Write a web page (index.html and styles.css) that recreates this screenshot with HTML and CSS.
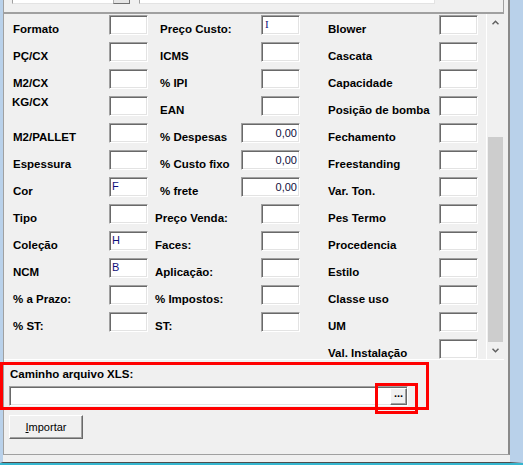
FILE: index.html
```html
<!DOCTYPE html>
<html>
<head>
<meta charset="utf-8">
<link rel="stylesheet" href="styles.css">
</head>
<body>
<div class="window">
  <div class="panel">
    <div class="topstrip">
      <div class="combo"><div class="combo-btn"></div></div>
      <div class="topinput"></div>
    </div>
    <div class="scrollbox">
      <div class="fields">
        <div class="col col1">
          <div class="row"><span class="lbl">Formato</span><div class="fld"></div></div>
          <div class="row"><span class="lbl">PÇ/CX</span><div class="fld"></div></div>
          <div class="row"><span class="lbl">M2/CX</span><div class="fld"></div></div>
          <div class="row"><span class="lbl up">KG/CX</span><div class="fld"></div></div>
          <div class="row"><span class="lbl">M2/PALLET</span><div class="fld"></div></div>
          <div class="row"><span class="lbl">Espessura</span><div class="fld"></div></div>
          <div class="row"><span class="lbl">Cor</span><div class="fld">F</div></div>
          <div class="row"><span class="lbl">Tipo</span><div class="fld"></div></div>
          <div class="row"><span class="lbl">Coleção</span><div class="fld">H</div></div>
          <div class="row"><span class="lbl">NCM</span><div class="fld">B</div></div>
          <div class="row"><span class="lbl">% a Prazo:</span><div class="fld"></div></div>
          <div class="row"><span class="lbl">% ST:</span><div class="fld"></div></div>
        </div>
        <div class="col col2">
          <div class="row"><span class="lbl">Preço Custo:</span><div class="fld"><span class="serif">I</span></div></div>
          <div class="row"><span class="lbl">ICMS</span><div class="fld"></div></div>
          <div class="row"><span class="lbl">% IPI</span><div class="fld"></div></div>
          <div class="row"><span class="lbl">EAN</span><div class="fld"></div></div>
          <div class="row"><span class="lbl">% Despesas</span><div class="fld wide">0,00</div></div>
          <div class="row"><span class="lbl">% Custo fixo</span><div class="fld wide">0,00</div></div>
          <div class="row"><span class="lbl">% frete</span><div class="fld wide">0,00</div></div>
          <div class="row"><span class="lbl shift">Preço Venda:</span><div class="fld"></div></div>
          <div class="row"><span class="lbl shift">Faces:</span><div class="fld"></div></div>
          <div class="row"><span class="lbl shift">Aplicação:</span><div class="fld"></div></div>
          <div class="row"><span class="lbl shift">% Impostos:</span><div class="fld"></div></div>
          <div class="row"><span class="lbl shift">ST:</span><div class="fld"></div></div>
        </div>
        <div class="col col3">
          <div class="row"><span class="lbl">Blower</span><div class="fld"></div></div>
          <div class="row"><span class="lbl">Cascata</span><div class="fld"></div></div>
          <div class="row"><span class="lbl">Capacidade</span><div class="fld"></div></div>
          <div class="row"><span class="lbl">Posição de bomba</span><div class="fld"></div></div>
          <div class="row"><span class="lbl">Fechamento</span><div class="fld"></div></div>
          <div class="row"><span class="lbl">Freestanding</span><div class="fld"></div></div>
          <div class="row"><span class="lbl">Var. Ton.</span><div class="fld"></div></div>
          <div class="row"><span class="lbl">Pes Termo</span><div class="fld"></div></div>
          <div class="row"><span class="lbl">Procedencia</span><div class="fld"></div></div>
          <div class="row"><span class="lbl">Estilo</span><div class="fld"></div></div>
          <div class="row"><span class="lbl">Classe uso</span><div class="fld"></div></div>
          <div class="row"><span class="lbl">UM</span><div class="fld"></div></div>
          <div class="row"><span class="lbl">Val. Instalação</span><div class="fld"></div></div>
        </div>
      </div>
      <div class="scrollbar">
        <div class="sb-btn"><svg width="7" height="5" viewBox="0 0 7 5"><polyline points="0.5,4.2 3.5,1.2 6.5,4.2" fill="none" stroke="#606060" stroke-width="1.5"/></svg></div>
        <div class="sb-track"><div class="sb-thumb"></div></div>
        <div class="sb-btn"><svg width="7" height="5" viewBox="0 0 7 5"><polyline points="0.5,0.8 3.5,3.8 6.5,0.8" fill="none" stroke="#606060" stroke-width="1.5"/></svg></div>
      </div>
    </div>
    <div class="bottom">
      <div class="cap">Caminho arquivo XLS:</div>
      <div class="path"><div class="browse">...</div></div>
      <div class="btn"><span><u>I</u>mportar</span></div>
    </div>
  </div>
</div>
<div class="mark mark-a"></div>
<div class="mark mark-b"></div>
</body>
</html>
```
FILE: styles.css
```css
html, body {
  margin: 0;
  padding: 0;
  background: #ffffff;
}
body {
  width: 523px;
  height: 472px;
  overflow: hidden;
  position: relative;
  font-family: "Liberation Sans", Arial, sans-serif;
  color: #000;
}
.window {
  box-sizing: border-box;
  width: 523px;
  height: 463px;
  background: #f0f0f0;
  border-left: 3px solid #b9d1ea;
  border-right: 13px solid #b9d1ea;
  border-bottom: 1px solid #4d4d4d;
  box-shadow: 0 2px 0 #35b6cf;
}
.panel {
  box-sizing: border-box;
  height: 455px;
  border-left: 1px solid #a0a0a0;
  border-right: 2px solid #8a8a8a;
  border-bottom: 1px solid #a0a0a0;
  display: flex;
  flex-direction: column;
}
.topstrip {
  box-sizing: border-box;
  width: 500px;
  height: 12px;
  border-right: 1px solid #a0a0a0;
  display: flex;
  align-items: flex-start;
}
.combo {
  box-sizing: border-box;
  margin-left: 8px;
  width: 118px;
  height: 4px;
  background: #fff;
  border-left: 1px solid #a0a0a0;
  border-bottom: 1px solid #e3e3e3;
  display: flex;
  justify-content: flex-end;
}
.combo-btn {
  box-sizing: border-box;
  width: 17px;
  height: 4px;
  background: #e5e5e5;
  border-left: 1px solid #b0b0b0;
  border-right: 1px solid #707070;
  border-bottom: 1px solid #707070;
}
.topinput {
  box-sizing: border-box;
  margin-left: 9px;
  width: 296px;
  height: 4px;
  background: #fff;
  border-left: 1px solid #a0a0a0;
  border-right: 1px solid #e3e3e3;
  border-bottom: 1px solid #e3e3e3;
}
.scrollbox {
  box-sizing: border-box;
  width: 500px;
  height: 348px;
  border-top: 2px solid #a0a0a0;
  border-bottom: 1px solid #ffffff;
  display: flex;
}
.fields {
  width: 482px;
  padding-top: 1px;
  display: flex;
  align-items: flex-start;
  overflow: hidden;
}
.col {
  display: flex;
  flex-direction: column;
  flex: none;
}
.col1 { width: 144px; }
.col2 { width: 140px; margin-left: 12px; }
.col3 { width: 178px; }
.row {
  height: 27px;
  display: flex;
  align-items: flex-start;
  flex: none;
}
.lbl {
  flex: 1;
  font-weight: bold;
  font-size: 11.5px;
  line-height: 13px;
  padding-top: 8px;
  white-space: nowrap;
}
.col1 .lbl { padding-left: 9px; }
.col3 .lbl { padding-left: 28px; }
.lbl.up { padding-top: 0; margin-left: -1px; }
.lbl.shift { margin-left: -5px; }
.fld {
  box-sizing: border-box;
  flex: none;
  width: 39px;
  height: 20px;
  background: #fff;
  border: 1px solid;
  border-color: #a0a0a0 #ffffff #ffffff #a0a0a0;
  box-shadow: inset 1px 1px 0 #696969, inset -1px -1px 0 #e3e3e3;
  font-size: 11px;
  line-height: 13px;
  color: #10107a;
  padding: 2px 0 0 2px;
}
.fld.wide {
  width: 59px;
  text-align: right;
  padding: 3px 2px 0 0;
  color: #101040;
}
.serif {
  font-family: "Liberation Serif", "Times New Roman", serif;
  font-size: 11px;
  margin-left: 1px;
}
.scrollbar {
  box-sizing: border-box;
  width: 18px;
  border-left: 1px solid #ffffff;
  display: flex;
  flex-direction: column;
}
.sb-btn {
  height: 17px;
  flex: none;
  display: flex;
  align-items: center;
  justify-content: center;
}
.sb-btn svg { display: block; }
.sb-track {
  flex: 1;
  display: flex;
  flex-direction: column;
  padding-top: 106px;
}
.sb-thumb {
  flex: 1;
  background: #cdcdcd;
  margin: 0 1px;
}
.bottom {
  padding: 8px 0 0 5px;
}
.cap {
  font-weight: bold;
  font-size: 11.5px;
  line-height: 13px;
  margin-left: 1px;
}
.path {
  box-sizing: border-box;
  margin-top: 5px;
  width: 399px;
  height: 20px;
  background: #fff;
  border: 1px solid;
  border-color: #a0a0a0 #ffffff #ffffff #a0a0a0;
  box-shadow: inset 1px 1px 0 #696969, inset -1px -1px 0 #e3e3e3;
  display: flex;
  justify-content: flex-end;
  align-items: center;
}
.browse {
  box-sizing: border-box;
  width: 17px;
  height: 17px;
  background: #f0f0f0;
  border: 1px solid;
  border-color: #ffffff #696969 #696969 #ffffff;
  box-shadow: inset -1px -1px 0 #a0a0a0;
  font-weight: bold;
  font-size: 11px;
  line-height: 8px;
  text-align: center;
}
.btn {
  box-sizing: border-box;
  margin-top: 9px;
  width: 74px;
  height: 24px;
  background: #f0f0f0;
  border: 1px solid;
  border-color: #ffffff #696969 #696969 #ffffff;
  box-shadow: inset -1px -1px 0 #a0a0a0;
  font-size: 11px;
  display: flex;
  align-items: center;
  justify-content: center;
}
.mark {
  position: absolute;
  box-sizing: border-box;
  border: 3px solid #ff0000;
}
.mark-a {
  left: 0;
  top: 362px;
  width: 429px;
  height: 48px;
}
.mark-b {
  left: 375px;
  top: 383px;
  width: 43px;
  height: 31px;
}
```
